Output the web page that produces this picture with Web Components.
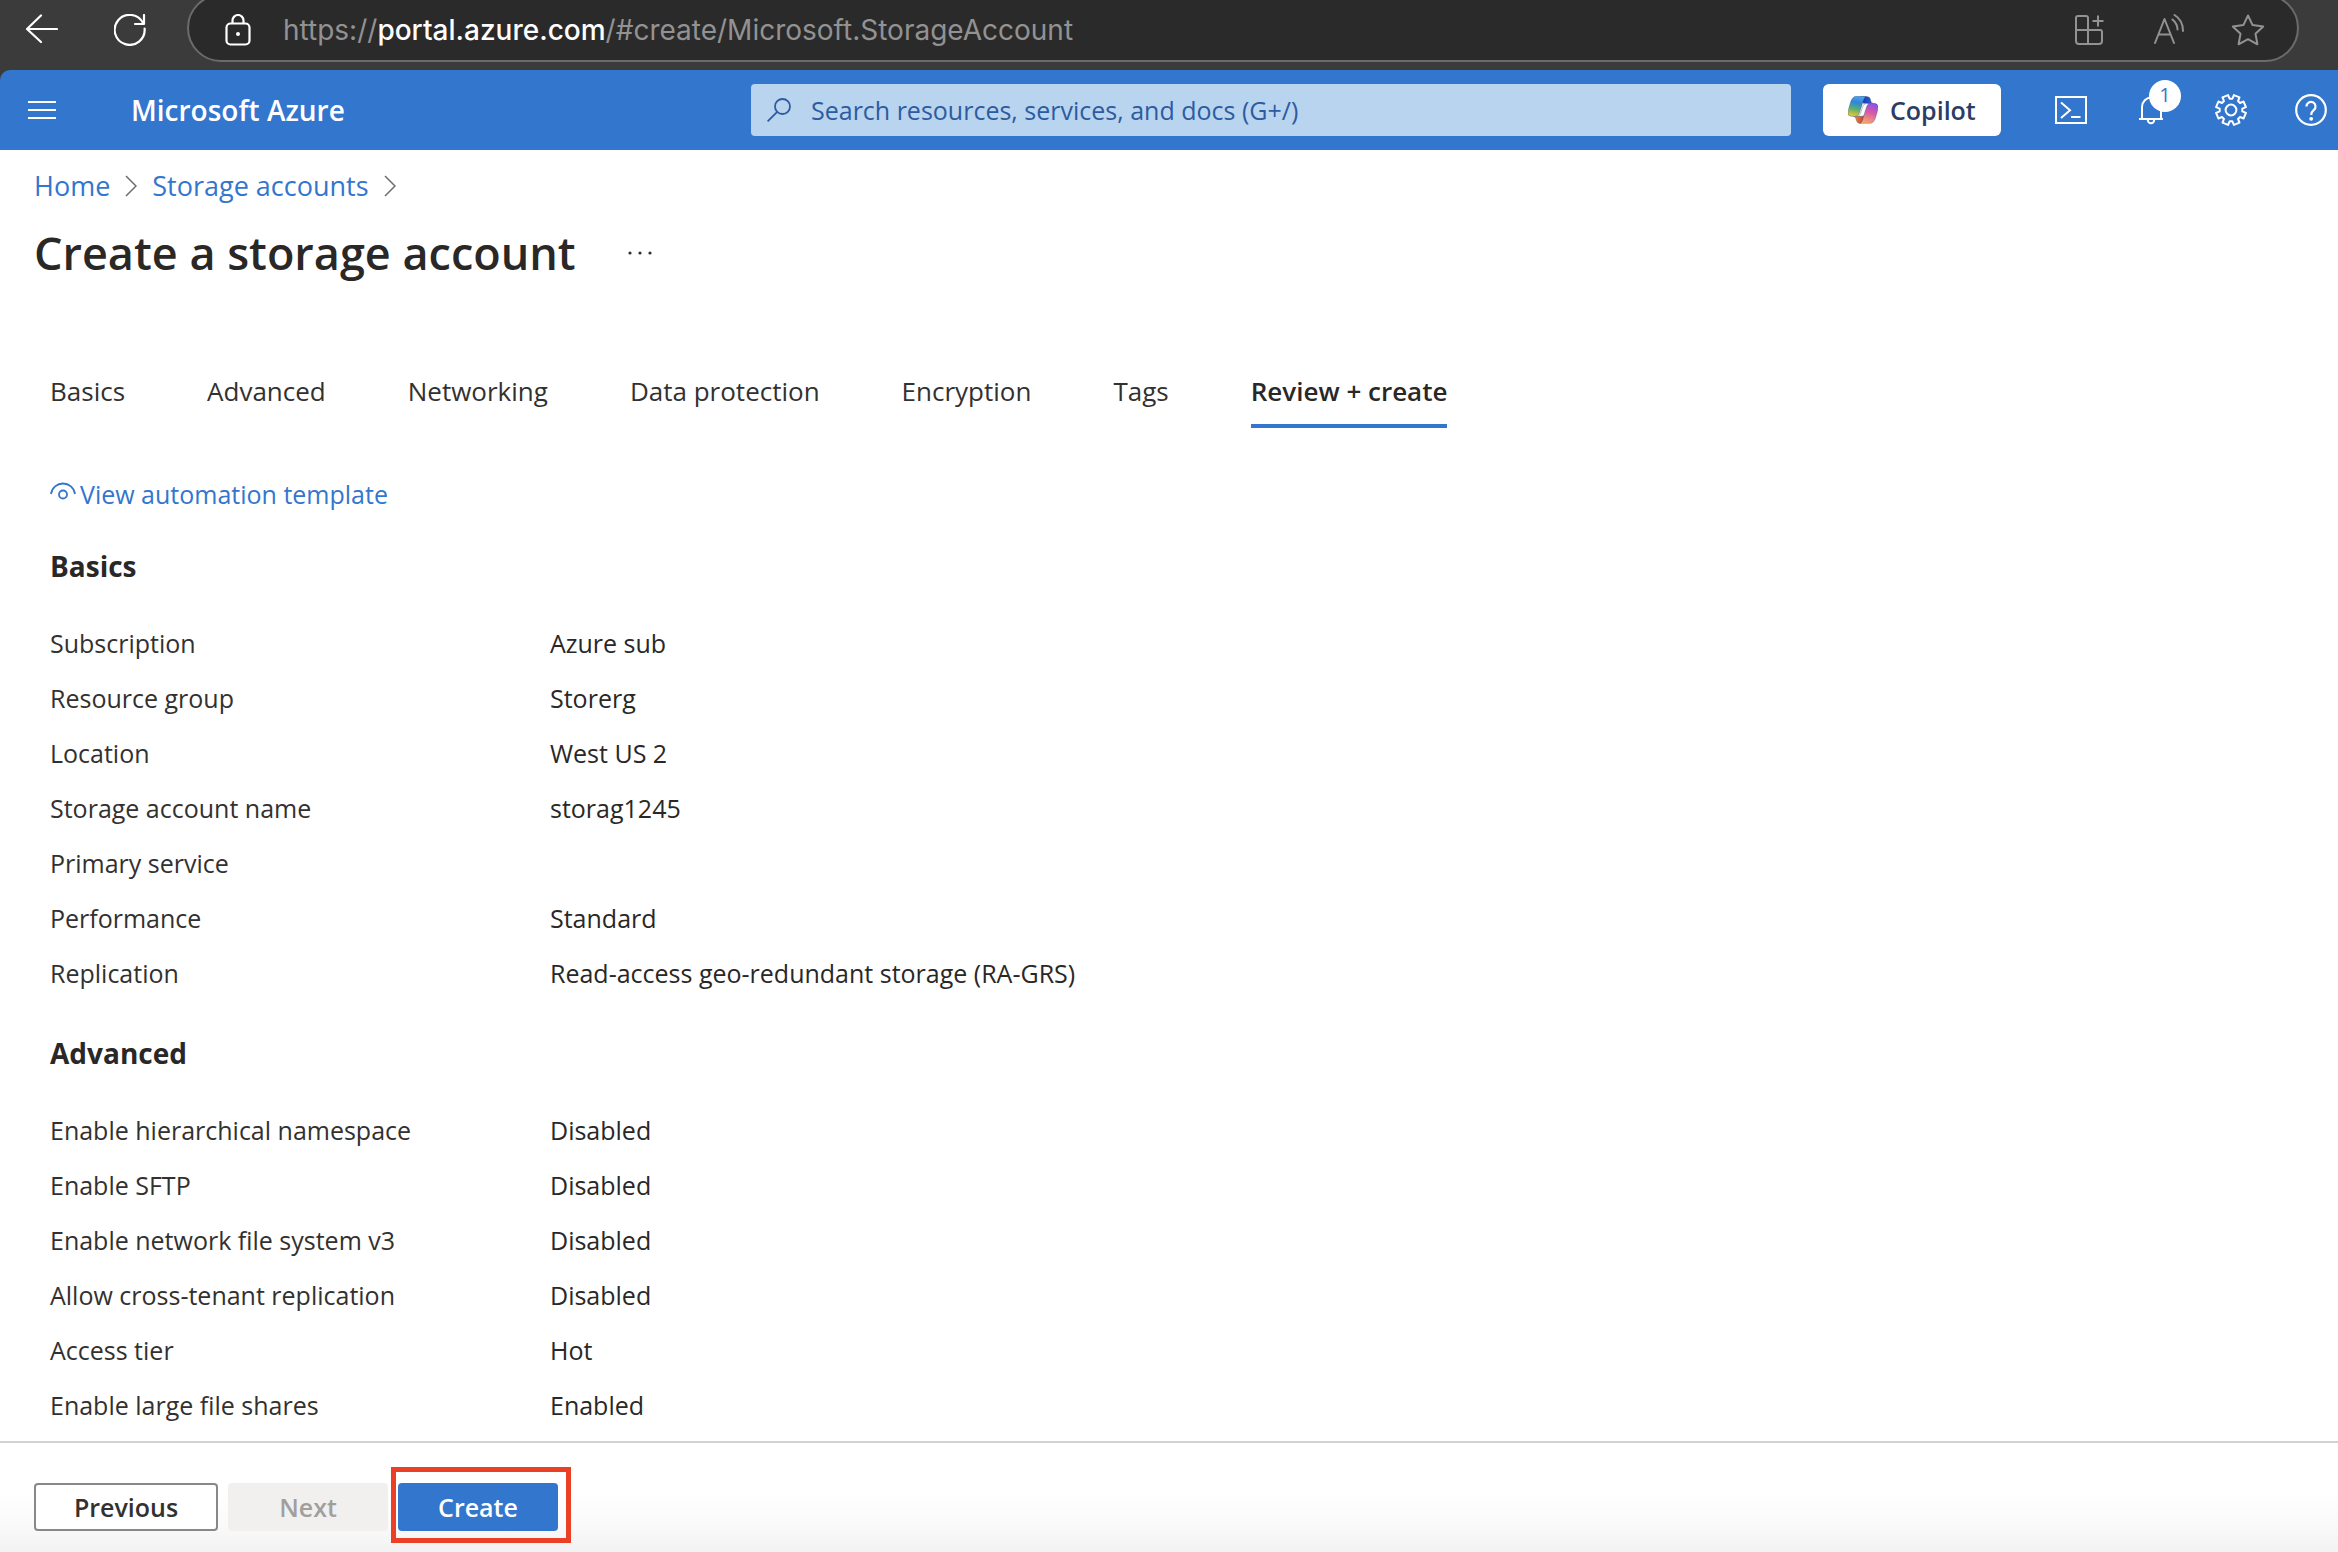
<!DOCTYPE html>
<html lang="en">
<head>
<meta charset="utf-8">
<title>Create a storage account - Microsoft Azure</title>
<style>
  html, body { margin: 0; height: 100%; }
  body {
    --blue: #3376cd;
    --ink: #292827;
    --text: #323130;
    font-family: "Open Sans", "Noto Sans", sans-serif;
    font-size: 25px;
    color: var(--text);
    background: #fff;
  }
</style>
</head>
<body>
<azure-app></azure-app>

<script>
function define(name, html, setup) {
  const template = document.createElement('template');
  template.innerHTML = html;
  customElements.define(name, class extends HTMLElement {
    constructor() {
      super();
      this.attachShadow({ mode: 'open' }).append(template.content.cloneNode(true));
    }
    connectedCallback() { if (setup) setup(this, this.shadowRoot); }
  });
}

const reset = `
  :host, * { box-sizing: border-box; }
  button { font: inherit; color: inherit; background: none; border: 0; padding: 0; margin: 0; cursor: pointer; }
  svg { display: block; flex: none; fill: none; stroke: currentColor; }
  a { text-decoration: none; color: inherit; }
`;

/* Browser toolbar */
define('browser-bar', `
<style>${reset}
  :host { display: block; background: #3b3b3b; height: 70px; color: #fff; overflow: hidden; flex: none; }
  .bar { display: flex; align-items: flex-start; padding: 0 39px 0 26px; }
  .nav { display: flex; gap: 56px; margin-right: 41px; padding-top: 14px; }
  .nav button { width: 32px; height: 32px; }
  .pill { flex: 1; display: flex; align-items: center; height: 68px; margin-top: -6px; padding: 4px 32px 0 36px;
    border: 2px solid #6b6b6b; border-radius: 34px; background: #2a2a2a; }
  .url { flex: 1; margin-left: 32px; font: 28px/40px Inter, "Liberation Sans", sans-serif; color: #929292; white-space: nowrap; }
  .url b { font-weight: 500; color: #fff; }
  .tools { display: flex; gap: 46px; color: #929292; }
</style>
<div class="bar">
  <div class="nav">
    <button aria-label="Back"><svg width="32" height="32" viewBox="0 0 32 32" stroke-width="2.2" stroke-linecap="round" stroke-linejoin="round"><path d="M31 15H1M15 1.5 1 15l14 13"/></svg></button>
    <button aria-label="Reload"><svg width="32" height="32" viewBox="0 0 32 32" stroke-width="2.2" stroke-linecap="round" stroke-linejoin="round"><path d="M30.6 14.5A15 15 0 1 1 29 9M30 1v9h-9"/></svg></button>
  </div>
  <div class="pill">
    <svg width="26" height="32" viewBox="0 0 26 32" stroke="#fff" stroke-width="2.2"><rect x="1.5" y="9.5" width="23" height="21" rx="4"/><path d="M7.500 9.500V6.500a5.500 5.500 0 0 1 11 0v3"/><circle cx="13" cy="20" r="2" fill="#fff" stroke="none"/></svg>
    <div class="url">https://<b>portal.azure.com</b>/#create/Microsoft.StorageAccount</div>
    <div class="tools">
      <button aria-label="Add app"><svg width="32" height="32" viewBox="2 0 32 32" stroke-width="2"><path d="M15 16V4a2 2 0 0 0-2-2H5a2 2 0 0 0-2 2v23a3 3 0 0 0 3 3h20a3 3 0 0 0 3-3V18a2 2 0 0 0-2-2H3M15 16v14M25 1.500v11M19.500 7h11"/></svg></button>
      <button aria-label="Read aloud"><svg width="32" height="32" viewBox="0 0 32 32" stroke-width="2" stroke-linecap="round" stroke-linejoin="round"><path d="M2 29 11.500 5 21 29M5.500 20.500h12M19.500 5.500c3 2.500 5 6 5 10M21.500 1c5 3 8.500 9 8.500 16"/></svg></button>
      <button aria-label="Add to favorites"><svg width="34" height="32" viewBox="0 0 34 32" stroke-width="2" stroke-linejoin="round"><path d="m17 1.500 4.600 9.600 10.600 1.400-7.700 7.300 1.900 10.500L17 25.200l-9.400 5.100 1.900-10.500-7.700-7.300 10.600-1.400z"/></svg></button>
    </div>
  </div>
</div>`);

/* Azure top bar */
define('portal-header', `
<style>${reset}
  :host { display: block; flex: none; background: #3b3b3b; color: #fff; }
  header { display: flex; align-items: center; height: 80px; padding-right: 11px; background: var(--blue); border-top-left-radius: 10px; }
  .brand { flex: 1; display: flex; align-items: center; gap: 75px; padding-left: 28px; font-size: 28px; line-height: 40px; font-weight: 600; white-space: nowrap; }
  .search { flex: 0 1 1040px; display: flex; align-items: center; height: 52px; padding: 0 16px; gap: 20px; border-radius: 4px; background: #b9d4ef; color: #2c5c9f; }
  input { flex: 1; min-width: 0; border: 0; padding: 0; background: none; outline: 0; font: inherit; line-height: 40px; color: inherit; }
  input::placeholder { color: inherit; opacity: 1; }
  .copilot { display: flex; align-items: center; gap: 12px; height: 52px; width: 178px; padding-left: 25px; margin: 0 54px 0 32px; border-radius: 6px; background: #fff; color: #2b3d66; font-weight: 600; }
  .icons { display: flex; gap: 48px; }
  .icons button { width: 32px; height: 32px; display: block; position: relative; }
  .badge { position: absolute; left: 14px; top: -14px; width: 32px; height: 32px; border-radius: 50%; background: #fff; color: var(--blue); font-size: 20px; line-height: 30px; text-align: center; }
</style>
<header>
  <div class="brand">
    <button aria-label="Show portal menu"><svg width="28" height="18" viewBox="0 0 28 18" stroke-width="2"><path d="M0 1h28M0 9h28M0 17h28"/></svg></button>
    <a href="#home">Microsoft Azure</a>
  </div>
  <label class="search">
    <svg width="24" height="24" viewBox="0 0 24 24" stroke-width="1.8"><circle cx="15.500" cy="8.500" r="7.500"/><path d="M10.200 13.800.6 23.400"/></svg>
    <input type="text" aria-label="Search" placeholder="Search resources, services, and docs (G+/)">
  </label>
  <button class="copilot">
    <svg width="30" height="28" viewBox="0 0 90 84" stroke="none">
      <defs>
        <linearGradient id="l" x1="0.500" y1="0" x2="0.300" y2="1"><stop offset="0" stop-color="#4aa3ee"/><stop offset=".3" stop-color="#2f86d8"/><stop offset=".65" stop-color="#5db070"/><stop offset="1" stop-color="#f2c92e"/></linearGradient>
        <linearGradient id="r" x1="0.650" y1="0" x2="0.350" y2="1"><stop offset="0" stop-color="#9050e8"/><stop offset=".45" stop-color="#d85aa5"/><stop offset="1" stop-color="#fbaa66"/></linearGradient>
        <linearGradient id="b"><stop offset="0" stop-color="#1c2fae"/><stop offset="1" stop-color="#2c66dc"/></linearGradient>
        <linearGradient id="o"><stop offset="0" stop-color="#f09a38"/><stop offset="1" stop-color="#cf3a2c"/></linearGradient>
      </defs>
      <path fill="url(#b)" d="M38 2h20q7 0 9 7l2 8q1 5 6 5H46z"/>
      <path fill="url(#o)" d="M16 61h32l-6 16q-2 5-7 5-7 0-9-7l-3-9q-2-5-7-5z"/>
      <path fill="url(#l)" d="M26 1h30q-6 1-9 10L34 51q-3 10-12 10H10Q0 61 0 51q0-8 9-36Q14 1 26 1z"/>
      <path fill="url(#r)" d="M63 22h15q12 0 12 12 0 8-8 33-5 15-17 15H35q6-1 9-10l11-42q2-8 8-8z"/>
      <path fill="#fff" d="M55 23h9q-6 2-8 9l-7 22q-2 7-9 7h-9q4-2 6-8l8-23q3-7 10-7z"/>
    </svg>
    <span>Copilot</span>
  </button>
  <div class="icons">
    <button aria-label="Cloud Shell"><svg width="32" height="32" viewBox="0 0 32 32" stroke-width="2"><rect x="1" y="3" width="30" height="26"/><path d="m6 8.500 9 7.800-9 7.700M16 23h9.500"/></svg></button>
    <button aria-label="Notifications"><svg width="32" height="32" viewBox="0 0 32 32" stroke-width="2"><path d="M7 25V13a9.500 9.500 0 0 1 19 0v12M4 25h24M12.800 26a3.200 3.200 0 0 0 6.400 0"/></svg><span class="badge">1</span></button>
    <button aria-label="Settings"><svg class="gear" width="32" height="32" viewBox="0 0 32 32" stroke-width="2" stroke-linejoin="round"><path/><circle cx="16" cy="16" r="5.400"/></svg></button>
    <button aria-label="Help"><svg width="32" height="32" viewBox="0 0 32 32" stroke-width="2.200"><circle cx="16" cy="16" r="14.800"/><path d="M11.500 12.500a4.500 4.500 0 1 1 7.400 3.400c-1.700 1.400-2.700 2.300-2.700 5.100"/><circle cx="16.200" cy="24.800" r="1.900" fill="#fff" stroke="none"/></svg></button>
  </div>
</header>`, (host, root) => {
  // Eight flat teeth with shallow notches between them.
  const p = (r, a) => (16 + r * Math.sin(a)).toFixed(2) + ' ' + (16 - r * Math.cos(a)).toFixed(2);
  const pts = [];
  for (let i = 0; i < 8; i++) {
    const a = (i + 0.5) * Math.PI / 4;
    pts.push(p(11.4, a - 0.27), p(15.2, a - 0.2), p(15.2, a + 0.2), p(11.4, a + 0.27));
  }
  root.querySelector('.gear path').setAttribute('d', 'M' + pts.join('L') + 'Z');
});

define('bread-crumbs', `
<style>${reset}
  :host { display: block; }
  nav { display: flex; align-items: center; gap: 15px; font-size: 27px; line-height: 40px; }
  ::slotted(a) { color: var(--blue); text-decoration: none; }
  svg { color: #6e6d6c; }
</style>
<nav aria-label="Breadcrumb">
  <slot name="first"></slot>
  <svg width="12" height="22" viewBox="0 0 12 22" stroke-width="1.500"><path d="m1 1 10 10L1 21"/></svg>
  <slot name="second"></slot>
  <svg width="12" height="22" viewBox="0 0 12 22" stroke-width="1.500"><path d="m1 1 10 10L1 21"/></svg>
</nav>`);

define('page-title', `
<style>${reset}
  :host { display: flex; align-items: center; gap: 52px; }
  h1 { margin: 0; font-size: 45px; line-height: 60px; font-weight: 600; color: var(--ink); }
  svg { fill: var(--text); stroke: none; }
</style>
<h1><slot></slot></h1>
<button aria-label="More"><svg width="24" height="4" viewBox="0 0 24 4"><circle cx="2" cy="2" r="1.600"/><circle cx="12" cy="2" r="1.600"/><circle cx="22" cy="2" r="1.600"/></svg></button>`);

define('tab-strip', `
<style>${reset}
  :host { display: flex; gap: 82px; font-size: 26px; line-height: 40px; }
  button { padding-bottom: 13px; border-bottom: 4px solid transparent; white-space: nowrap; }
  button[aria-selected="true"] { border-color: var(--blue); font-weight: 600; color: var(--ink); }
</style>`, (host, root) => {
  host.setAttribute('role', 'tablist');
  const labels = host.getAttribute('labels').split('|');
  labels.forEach((label, i) => {
    const b = document.createElement('button');
    b.setAttribute('role', 'tab');
    b.setAttribute('aria-selected', i === labels.length - 1);
    b.textContent = label;
    root.append(b);
  });
});

define('template-link', `
<style>${reset}
  :host { display: block; line-height: 40px; }
  a { display: flex; align-items: flex-start; gap: 4px; color: var(--blue); }
  svg { margin-top: 8px; }
</style>
<a href="#template"><svg width="26" height="20" viewBox="0 0 26 20" stroke-width="1.800"><path d="M1 12C2 5.500 7 1.500 13 1.500S24 5.500 25 12"/><circle cx="13" cy="12.500" r="4"/></svg><slot></slot></a>`);

define('summary-section', `
<style>${reset}
  :host { display: block; }
  h2 { margin: 0 0 30px; font-size: 28px; line-height: 40px; font-weight: 700; color: var(--ink); }
  dl { margin: 0; display: grid; grid-template-columns: 500px 1fr; line-height: 55px; }
</style>
<h2></h2>
<dl><slot></slot></dl>`, (host, root) => {
  root.querySelector('h2').textContent = host.getAttribute('heading');
});

define('summary-row', `
<style>
  :host { grid-column: 1 / -1; display: grid; grid-template-columns: subgrid; min-height: 55px; }
  dt, dd { margin: 0; }
  dd { color: var(--ink); }
</style>
<dt></dt><dd><slot></slot></dd>`, (host, root) => {
  root.querySelector('dt').textContent = host.getAttribute('label');
});

define('wizard-footer', `
<style>${reset}
  :host { display: flex; gap: 10px; flex: none; height: 111px; padding: 40px 34px 0; border-top: 2px solid #d2d2d2;
    background: linear-gradient(#fff 45%, #fafafa 75%, #f2f2f2); font-weight: 600; }
  button { height: 48px; min-width: 160px; border-radius: 4px; line-height: 40px; }
  .prev { min-width: 184px; border: 2px solid #8a8886; background: #fff; color: var(--text); }
  .next { background: #f1f0ef; color: #a19f9d; }
  .create { position: relative; background: var(--blue); color: #fff; }
  .create::after { content: ""; position: absolute; inset: -16px -13px -12px -7px; border: 5px solid #ea4025; }
</style>
<button class="prev">Previous</button>
<button class="next" disabled>Next</button>
<button class="create">Create</button>`);

define('azure-app', `
<style>
  :host { display: flex; flex-direction: column; height: 100vh; }
  main { flex: 1; min-height: 0; overflow: hidden; padding: 16px 34px 0; }
  page-title { margin-top: 17px; }
  .form { padding-left: 16px; }
  tab-strip { margin-top: 88px; }
  template-link { margin-top: 46px; }
  summary-section { margin-top: 32px; }
</style>
<browser-bar></browser-bar>
<portal-header></portal-header>
<main>
  <bread-crumbs><a slot="first" href="#home">Home</a><a slot="second" href="#storage">Storage accounts</a></bread-crumbs>
  <page-title>Create a storage account</page-title>
  <div class="form">
    <tab-strip labels="Basics|Advanced|Networking|Data protection|Encryption|Tags|Review + create"></tab-strip>
    <template-link>View automation template</template-link>
    <summary-section heading="Basics">
      <summary-row label="Subscription">Azure sub</summary-row>
      <summary-row label="Resource group">Storerg</summary-row>
      <summary-row label="Location">West US 2</summary-row>
      <summary-row label="Storage account name">storag1245</summary-row>
      <summary-row label="Primary service"></summary-row>
      <summary-row label="Performance">Standard</summary-row>
      <summary-row label="Replication">Read-access geo-redundant storage (RA-GRS)</summary-row>
    </summary-section>
    <summary-section heading="Advanced">
      <summary-row label="Enable hierarchical namespace">Disabled</summary-row>
      <summary-row label="Enable SFTP">Disabled</summary-row>
      <summary-row label="Enable network file system v3">Disabled</summary-row>
      <summary-row label="Allow cross-tenant replication">Disabled</summary-row>
      <summary-row label="Access tier">Hot</summary-row>
      <summary-row label="Enable large file shares">Enabled</summary-row>
    </summary-section>
  </div>
</main>
<wizard-footer></wizard-footer>`);
</script>
</body>
</html>
